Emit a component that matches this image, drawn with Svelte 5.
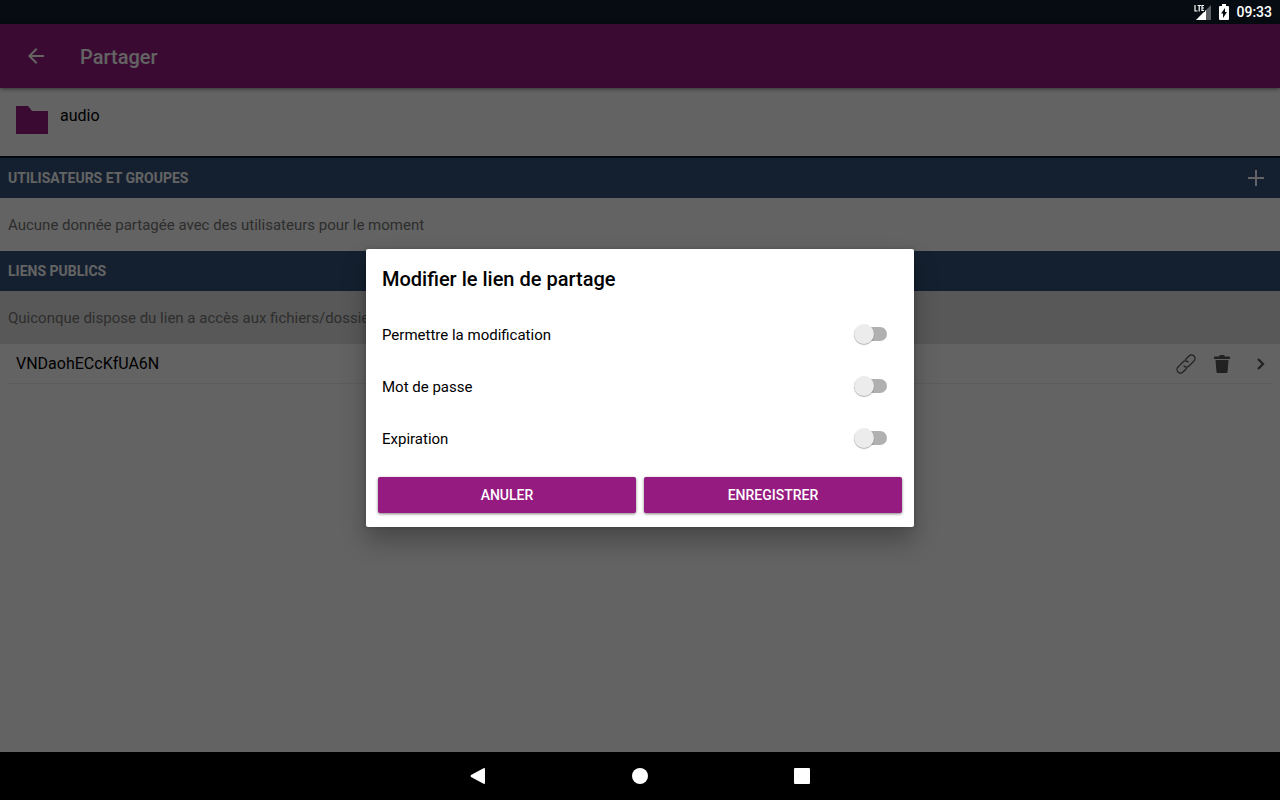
<script lang="ts">
  let permissions = $state([
    { id: "edit", label: "Permettre la modification", enabled: false },
    { id: "password", label: "Mot de passe", enabled: false },
    { id: "expiration", label: "Expiration", enabled: false },
  ]);

  let dialogOpen = $state(true);

  const links = ["VNDaohECcKfUA6N"];

  function closeDialog() {
    dialogOpen = false;
  }
</script>

<div class="device">
  <div class="status-bar">
    <svg width="18" height="18" viewBox="0 0 18 18">
      <path d="M17 2v15H2z" fill="#fff" opacity="0.35" />
      <path d="M12 7v10H2z" fill="#fff" />
      <path d="M0 0h11v9H0z" fill="#070c13" />
      <path d="M12 8v9H3l7-7z" fill="#fff" />
      <path d="M1 2v6h2.500M3.500 2.500h3.500M5.200 2.500v6M10 2.500H8v5h2M8 5h2" fill="none" stroke="#fff" stroke-width="1.2" />
    </svg>
    <svg width="10" height="16" viewBox="0 0 10 16">
      <path d="M3 0h4v2h2q1 0 1 1v12q0 1-1 1H1q-1 0-1-1V3q0-1 1-1h2z" fill="#fff" />
      <path d="M6 4v4h2l-4 6V9.500H2z" fill="#070c13" />
    </svg>
    <time>09:33</time>
  </div>

  <main class="screen">
    <header class="toolbar">
      <button class="icon-button" aria-label="Retour">
        <svg width="24" height="24" viewBox="0 0 24 24" fill="currentColor">
          <path d="M20 11H7.830l5.590-5.590L12 4l-8 8 8 8 1.410-1.410L7.830 13H20v-2z" />
        </svg>
      </button>
      <h1>Partager</h1>
    </header>

    <div class="file">
      <svg width="32" height="28" viewBox="0 0 32 28" fill="#951b81">
        <path d="M0 0h12l4 5h16v23H0z" />
      </svg>
      <span>audio</span>
    </div>

    <section>
      <div class="section-title first">
        <h2>Utilisateurs et groupes</h2>
        <button class="icon-button" aria-label="Ajouter">
          <svg width="16" height="16" viewBox="0 0 16 16" fill="currentColor">
            <path d="M7 0h2v7h7v2H9v7H7V9H0V7h7z" />
          </svg>
        </button>
      </div>
      <p class="notice">Aucune donnée partagée avec des utilisateurs pour le moment</p>
    </section>

    <section>
      <div class="section-title">
        <h2>Liens publics</h2>
      </div>
      <p class="notice shaded">Quiconque dispose du lien a accès aux fichiers/dossiers</p>
      <ul>
        {#each links as link}
          <li>
            <span class="link-name">{link}</span>
            <button class="icon-button" aria-label="Copier le lien">
              <svg width="20" height="20" viewBox="0 0 20 20" fill="none" stroke="currentColor" stroke-width="1.2" stroke-linecap="round">
                <path d="M9.500 5.500l3.500-3.500a3.500 3.500 0 0 1 5 5l-5 5a3.500 3.500 0 0 1-5 0" />
                <path d="M10.500 14.500l-3.500 3.500a3.500 3.500 0 0 1-5-5l5-5a3.500 3.500 0 0 1 5 0" />
              </svg>
            </button>
            <button class="icon-button" aria-label="Supprimer">
              <svg width="16" height="18" viewBox="0 0 16 18" fill="currentColor">
                <path d="M0 2q0-.5 1-.5h4L6 0h4l1 1.500h4q1 0 1 .5v2H0zM1.500 5h13l-1 12q0 1-1 1h-9q-1 0-1-1z" />
              </svg>
            </button>
            <button class="icon-button" aria-label="Modifier">
              <svg width="10" height="12" viewBox="0 0 10 12" fill="none" stroke="currentColor" stroke-width="2.2">
                <path d="M2 1l5 5-5 5" />
              </svg>
            </button>
          </li>
        {/each}
      </ul>
    </section>

    {#if dialogOpen}
      <div class="scrim">
        <div class="dialog" role="dialog" aria-modal="true" aria-labelledby="dialog-title">
          <h2 id="dialog-title">Modifier le lien de partage</h2>
          {#each permissions as permission (permission.id)}
            <div class="option">
              <label for={permission.id}>{permission.label}</label>
              <input id={permission.id} type="checkbox" role="switch" bind:checked={permission.enabled} />
            </div>
          {/each}
          <div class="actions">
            <button onclick={closeDialog}>Anuler</button>
            <button onclick={closeDialog}>Enregistrer</button>
          </div>
        </div>
      </div>
    {/if}
  </main>

  <nav class="nav-bar">
    <button class="icon-button" aria-label="Précédent">
      <svg width="16" height="16" viewBox="0 0 16 16" fill="#fff">
        <path d="M14 0q1 0 1 1v14q0 1-1 1L1 9q-1-1 0-2z" />
      </svg>
    </button>
    <button class="icon-button" aria-label="Accueil">
      <svg width="16" height="16" viewBox="0 0 16 16" fill="#fff">
        <circle cx="8" cy="8" r="8" />
      </svg>
    </button>
    <button class="icon-button" aria-label="Applications récentes">
      <svg width="16" height="16" viewBox="0 0 16 16" fill="#fff">
        <rect width="16" height="16" rx="1" />
      </svg>
    </button>
  </nav>
</div>

<style>
  :global(body) {
    margin: 0;
  }

  .device {
    background: #fff;
    color: #000;
    display: flex;
    flex-direction: column;
    font-family: Roboto, "Noto Sans", sans-serif;
    font-size: 16px;
    min-height: 100vh;
  }

  h1,
  h2,
  p,
  ul {
    margin: 0;
    padding: 0;
  }

  svg {
    display: block;
  }

  button {
    cursor: pointer;
    font-family: inherit;
  }

  .icon-button {
    background: none;
    border: 0;
    color: inherit;
    padding: 0;
  }

  .status-bar {
    align-items: center;
    background: #070c13;
    color: #fff;
    display: flex;
    font-size: 14px;
    font-weight: 500;
    gap: 7px;
    height: 24px;
    justify-content: flex-end;
    line-height: 24px;
    padding: 0 8px;
  }

  .screen {
    flex: 1;
    position: relative;
  }

  .toolbar {
    align-items: center;
    background: #951b81;
    box-shadow: 0 1px 4px rgba(0, 0, 0, 0.5);
    color: #fff;
    display: flex;
    gap: 32px;
    height: 64px;
    padding: 0 24px;
  }

  .toolbar h1 {
    font-size: 20px;
    font-weight: 500;
    line-height: 24px;
    padding-top: 2px;
  }

  .file {
    align-items: flex-start;
    box-sizing: border-box;
    display: flex;
    gap: 12px;
    height: 68px;
    line-height: 20px;
    padding: 18px 16px;
  }

  .section-title {
    align-items: center;
    background: #35527a;
    color: #fff;
    display: flex;
    height: 40px;
    justify-content: space-between;
    padding: 0 16px 0 8px;
  }

  .section-title.first {
    border-top: 2px solid #08101c;
  }

  .section-title h2 {
    font-size: 14px;
    font-weight: 700;
    line-height: 20px;
    text-transform: uppercase;
  }

  .notice {
    color: #757575;
    font-size: 15px;
    line-height: 20px;
    padding: 17px 8px 16px;
  }

  .notice.shaded {
    background: #e3e3e3;
  }

  ul {
    list-style: none;
    margin: 0 8px;
  }

  li {
    align-items: center;
    border-bottom: 1px solid #eee;
    color: #555;
    display: flex;
    height: 39px;
    padding: 0 6px 0 8px;
  }

  li .icon-button {
    display: flex;
    justify-content: center;
    width: 36px;
  }

  li .icon-button:last-child {
    justify-content: flex-end;
    width: 26px;
  }

  .link-name {
    color: #000;
    flex: 1;
  }

  .scrim {
    align-items: center;
    background: rgba(0, 0, 0, 0.61);
    display: flex;
    inset: 0;
    justify-content: center;
    position: absolute;
  }

  .dialog {
    background: #fff;
    border-radius: 2px;
    box-shadow: 0 14px 24px rgba(0, 0, 0, 0.28), 0 0 4px rgba(0, 0, 0, 0.2);
    box-sizing: border-box;
    max-width: 100%;
    padding: 0 12px 14px;
    width: 548px;
  }

  .dialog h2 {
    font-size: 20px;
    font-weight: 500;
    line-height: 60px;
    padding: 0 4px;
  }

  .option {
    align-items: center;
    display: flex;
    font-size: 15px;
    height: 52px;
    justify-content: space-between;
    padding: 0 15px 0 4px;
  }

  .option input {
    align-items: center;
    appearance: none;
    background: #b0b0b0;
    border-radius: 7px;
    cursor: pointer;
    display: flex;
    height: 14px;
    margin: 0 0 2px;
    width: 33px;
  }

  .option input::before {
    background: #ececec;
    border-radius: 50%;
    box-shadow: 0 1px 1px rgba(0, 0, 0, 0.3);
    content: "";
    flex: none;
    height: 20px;
    width: 20px;
  }

  .option input:checked {
    background: #d5a4cd;
    justify-content: flex-end;
  }

  .option input:checked::before {
    background: #951b81;
  }

  .actions {
    display: flex;
    gap: 8px;
    padding-top: 12px;
  }

  .actions button {
    background: #951b81;
    border: 0;
    border-radius: 2px;
    box-shadow: 0 1px 3px rgba(0, 0, 0, 0.5);
    color: #fff;
    flex: 1;
    font-size: 14px;
    font-weight: 500;
    height: 36px;
    text-transform: uppercase;
  }

  .nav-bar {
    align-items: center;
    background: #000;
    display: flex;
    gap: 146px;
    height: 48px;
    justify-content: center;
  }
</style>
